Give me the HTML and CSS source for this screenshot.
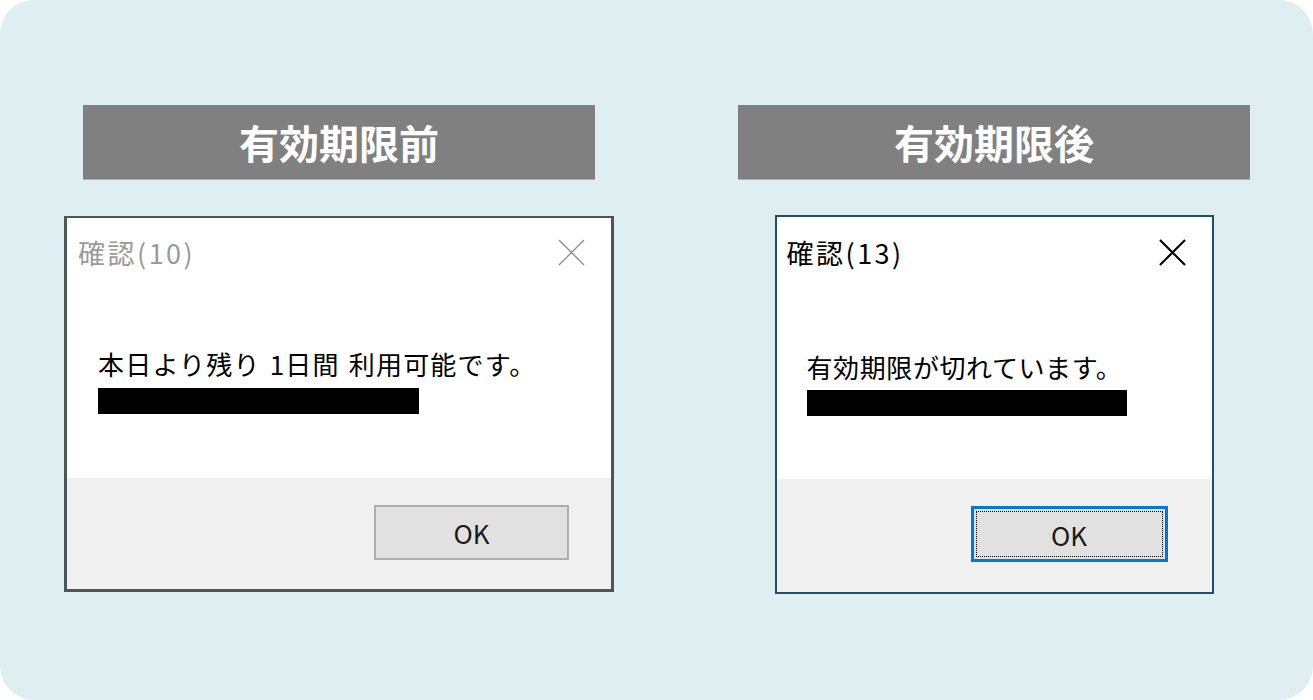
FILE: index.html
```html
<!DOCTYPE html>
<html>
  <head>
    <link rel="stylesheet" href="styles.css">
  </head>
  <body>
    <div class="panel">
      <div class="column column-before">
        <div class="heading">有効期限前</div>

        <div class="dialog dialog-inactive">
          <div class="dialog-body">
            <div class="title-bar">
              <span class="title">確認(10)</span>
              <svg class="close" viewBox="0 0 28 28">
                <path d="M1 1 L27 27 M27 1 L1 27" />
              </svg>
            </div>
            <div class="message">本日より残り 1日間 利用可能です。</div>
            <div class="masked"></div>
          </div>
          <div class="dialog-footer">
            <button class="ok-button">OK</button>
          </div>
        </div>
      </div>

      <div class="column column-after">
        <div class="heading">有効期限後</div>

        <div class="dialog dialog-active">
          <div class="dialog-body">
            <div class="title-bar">
              <span class="title">確認(13)</span>
              <svg class="close" viewBox="0 0 28 28">
                <path d="M1 1 L27 27 M27 1 L1 27" />
              </svg>
            </div>
            <div class="message">有効期限が切れています。</div>
            <div class="masked"></div>
          </div>
          <div class="dialog-footer">
            <button class="ok-button ok-focused">OK</button>
          </div>
        </div>
      </div>
    </div>
  </body>
</html>
```

FILE: styles.css
```css
body {
  margin: 0;
  background-color: #fff;
  font-family: "Noto Sans CJK JP", "Noto Sans", sans-serif;
}

.panel {
  width: 1313px;
  height: 700px;
  box-sizing: border-box;
  background-color: #dfeef1;
  border-radius: 34px;
  display: flex;
  padding: 105px 0 0 64px;
  gap: 124px;
}

.column {
  display: flex;
  flex-direction: column;
  align-items: center;
}

.column-before {
  width: 550px;
}

.column-after {
  width: 512px;
}

.heading {
  width: 512px;
  height: 75px;
  background-color: #808080;
  color: #fff;
  font-size: 40px;
  font-weight: bold;
  display: flex;
  align-items: center;
  justify-content: center;
  box-sizing: border-box;
  border-bottom: 1px solid #a9b2b5;
}

/* dialog windows */

.dialog {
  display: flex;
  flex-direction: column;
  box-sizing: border-box;
}

.dialog-inactive {
  width: 550px;
  height: 376px;
  margin-top: 36px;
  border: 3px solid #4c5559;
  border-top-width: 2px;
}

.dialog-active {
  width: 439px;
  height: 379px;
  margin-top: 35px;
  border: 2px solid #1f4f6f;
}

.dialog-body {
  background-color: #fff;
  height: 260px;
  box-sizing: border-box;
}

.dialog-active .dialog-body {
  height: 262px;
}

.title-bar {
  height: 68px;
  display: flex;
  align-items: center;
  justify-content: space-between;
  padding: 0 26px 0 11px;
}

.dialog-active .title-bar {
  height: 70px;
  padding-left: 10px;
}

.title {
  font-size: 27px;
  line-height: 1;
  letter-spacing: 2.5px;
}

.dialog-inactive .title {
  color: #9a9a9a;
}

.dialog-active .title {
  color: #000;
}

.close {
  width: 27px;
  height: 27px;
  fill: none;
}

.dialog-inactive .close {
  stroke: #8c8c8c;
  stroke-width: 1.4;
}

.dialog-active .close {
  stroke: #000;
  stroke-width: 2.2;
}

.message {
  font-size: 26px;
  line-height: 30px;
  color: #000;
  margin: 63px 0 0 31px;
  letter-spacing: 1.2px;
  word-spacing: 2px;
}

.dialog-active .message {
  margin: 65px 0 0 30px;
  letter-spacing: 0.6px;
}

.masked {
  background-color: #000;
  width: 321px;
  height: 26px;
  margin: 9px 0 0 31px;
}

.dialog-active .masked {
  width: 320px;
  margin: 8px 0 0 30px;
}

.dialog-footer {
  flex: 1;
  background-color: #f0f0f0;
  display: flex;
  justify-content: flex-end;
  align-items: flex-start;
  padding: 27px 42px 0 0;
}

.dialog-active .dialog-footer {
  padding: 27px 44px 0 0;
}

.ok-button {
  width: 195px;
  height: 55px;
  background-color: #e1e1e1;
  border: 2px solid #adadad;
  font-family: "Noto Sans CJK JP", "Noto Sans", sans-serif;
  font-size: 26px;
  color: #1a1a1a;
  padding: 0;
}

.ok-focused {
  width: 197px;
  height: 56px;
  border: 3px solid #0078d7;
  outline: 1px dotted #000;
  outline-offset: -6px;
}
```
